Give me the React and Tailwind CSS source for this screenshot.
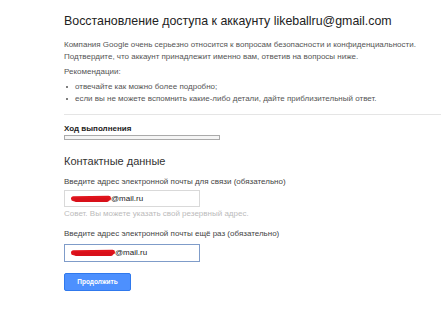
import React from 'react';

const Scribble = ({ w }) => (
    <span className="relative inline-block h-[8px]" style={{ width: w }}>
        <span className="absolute left-0 right-0 top-[1px] h-[5px] rounded-full bg-[#e0141c] -rotate-1" />
        <span className="absolute left-[3px] right-[2px] top-[3px] h-[4px] rounded-full bg-[#d8101a]" />
    </span>
);

const App = () => {
    return (
        <div className="w-[441px] h-[320px] bg-white pl-[64px] pt-[13px] text-[#555] overflow-hidden" style={{ fontFamily: '"Liberation Sans", Arial, sans-serif' }}>
            <h1 className="text-[12.4px] leading-[17px] text-[#222] whitespace-nowrap">
                Восстановление доступа к аккаунту likeballru@gmail.com
            </h1>
            <p className="mt-[9px] text-[8px] leading-[12px] whitespace-nowrap">
                Компания Google очень серьезно относится к вопросам безопасности и конфиденциальности.
                <br />
                Подтвердите, что аккаунт принадлежит именно вам, ответив на вопросы ниже.
            </p>
            <p className="mt-[3px] text-[8px] leading-[12px]">Рекомендации:</p>
            <ul className="mt-[3px] text-[8px] leading-[12px] whitespace-nowrap">
                <li className="flex items-center gap-[7px] pl-[2px]">
                    <span className="w-[2px] h-[2px] bg-[#555] rounded-full" />
                    отвечайте как можно более подробно;
                </li>
                <li className="flex items-center gap-[7px] pl-[2px]">
                    <span className="w-[2px] h-[2px] bg-[#555] rounded-full" />
                    если вы не можете вспомнить какие-либо детали, дайте приблизительный ответ.
                </li>
            </ul>
            <div className="mt-[9px] h-px bg-[#e5e5e5]" />
            <div className="mt-[9px] text-[8px] leading-[10px] font-bold text-[#222]">Ход выполнения</div>
            <div className="mt-[1px] w-[156px] h-[5px] border border-[#aaa] bg-[#f5f5f5]" />
            <h2 className="mt-[14px] text-[11px] leading-[14px] text-[#333]">Контактные данные</h2>
            <div className="mt-[9px] text-[8px] leading-[10px] text-[#444]">
                Введите адрес электронной почты для связи (обязательно)
            </div>
            <div className="mt-[3px] w-[136px] h-[17px] border border-[#d9d9d9] flex items-center pl-[6px] text-[8px] text-[#222]">
                <Scribble w={40} />
                <span>@mail.ru</span>
            </div>
            <div className="mt-[2px] text-[8px] leading-[10px] text-[#bbb]">
                Совет. Вы можете указать свой резервный адрес.
            </div>
            <div className="mt-[10px] text-[8px] leading-[10px] text-[#444]">
                Введите адрес электронной почты ещё раз (обязательно)
            </div>
            <div className="mt-[5px] w-[136px] h-[18px] border border-[#7f9cc9] flex items-center pl-[6px] text-[8px] text-[#222]">
                <Scribble w={44} />
                <span>@mail.ru</span>
            </div>
            <button className="mt-[11px] w-[67px] h-[18px] bg-[#4d90fe] border border-[#3079ed] rounded-[2px] text-white text-[6.5px] font-bold">
                Продолжить
            </button>
        </div>
    );
};

export default App;
